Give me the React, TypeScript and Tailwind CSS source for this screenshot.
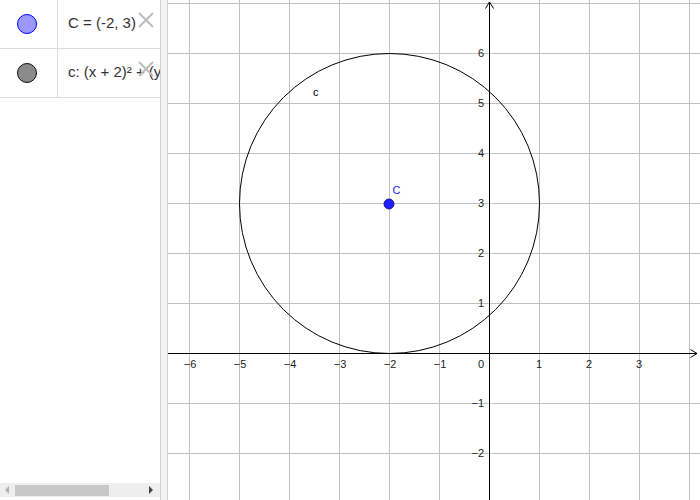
import React from 'react';

const FONT = { fontFamily: '"Liberation Sans", Arial, sans-serif' };

const XIcon = () => (
  <svg width="18" height="16" viewBox="0 0 18 16" className="absolute right-[5px] top-[12px]">
    <path d="M2 1 L16 15 M16 1 L2 15" stroke="#bdbdbd" strokeWidth="2" fill="none" />
  </svg>
);

const AlgebraRow = ({ fill, stroke, children }: { fill: string; stroke: string; children: React.ReactNode }) => (
  <div className="relative flex h-[49px] border-b border-[#dcdcdc]">
    <div className="flex w-[58px] shrink-0 items-center justify-center border-r border-[#dcdcdc] pr-[3px]">
      <svg width="22" height="22" viewBox="0 0 22 22">
        <circle cx="11" cy="11" r="9.5" fill={fill} stroke={stroke} strokeWidth="1" />
      </svg>
    </div>
    <div className="flex items-center overflow-hidden whitespace-nowrap pl-[10px] pb-[2px] text-[15px] text-[#333]">
      {children}
    </div>
    <XIcon />
  </div>
);

const AlgebraView = () => (
  <div className="flex w-[160px] shrink-0 flex-col bg-white" style={FONT}>
    <AlgebraRow fill="#9999ff" stroke="#0000ff">C = (-2, 3)</AlgebraRow>
    <AlgebraRow fill="#8a8a8a" stroke="#111">c: (x + 2)² + (y − 3)² = 9</AlgebraRow>
    <div className="flex-1" />
    {/* horizontal scrollbar */}
    <div className="flex h-[14px] items-center bg-[#eeeeee]">
      <svg width="14" height="14" viewBox="0 0 14 14">
        <path d="M9 3 L5 7 L9 11 Z" fill="#b0b0b0" />
      </svg>
      <div className="ml-[1px] h-[11px] w-[94px] bg-[#c8c8c8]" />
      <div className="flex-1" />
      <svg width="14" height="14" viewBox="0 0 14 14" className="mr-[2px]">
        <path d="M5 3 L9 7 L5 11 Z" fill="#444" />
      </svg>
    </div>
    <div className="h-[3px]" />
  </div>
);

const GraphicsView = () => {
  const ox = 489.5;
  const oy = 353.5;
  const u = 50;
  const vx = [-6, -5, -4, -3, -2, -1, 1, 2, 3, 4];
  const vy = [7, 6, 5, 4, 3, 2, 1, -1, -2];
  const xLabels = [-6, -5, -4, -3, -2, -1, 1, 2, 3];
  const yLabels = [6, 5, 4, 3, 2, 1, -1, -2];
  const lbl = (n: number) => (n < 0 ? '−' + Math.abs(n) : String(n));
  return (
    <svg width="532" height="500" viewBox="168 0 532 500" className="block bg-white" style={FONT}>
      {vx.map((k) => (
        <line key={'gx' + k} x1={ox + k * u} y1={0} x2={ox + k * u} y2={500} stroke="#c0c0c0" strokeWidth="1" />
      ))}
      {vy.map((k) => (
        <line key={'gy' + k} x1={168} y1={oy - k * u} x2={700} y2={oy - k * u} stroke="#c0c0c0" strokeWidth="1" />
      ))}
      {/* axes */}
      <line x1={168} y1={oy} x2={697} y2={oy} stroke="#000" strokeWidth="1" />
      <path d={`M690.5 ${oy - 4} L697 ${oy} L690.5 ${oy + 4}`} stroke="#000" strokeWidth="1" fill="none" />
      <line x1={ox} y1={500} x2={ox} y2={2} stroke="#000" strokeWidth="1" />
      <path d={`M${ox - 4} 8.5 L${ox} 2 L${ox + 4} 8.5`} stroke="#000" strokeWidth="1" fill="none" />
      {/* tick labels */}
      {xLabels.map((k) => (
        <text key={'lx' + k} x={489 + k * u + (k < 0 ? 1 : 0)} y={368} fontSize="11" fill="#222" textAnchor="middle">
          {lbl(k)}
        </text>
      ))}
      <text x={484} y={368} fontSize="11" fill="#222" textAnchor="end">0</text>
      {yLabels.map((k) => (
        <text key={'ly' + k} x={484} y={357 - k * u} fontSize="11" fill="#222" textAnchor="end">
          {lbl(k)}
        </text>
      ))}
      {/* circle c */}
      <circle cx={389.5} cy={203.5} r={150} stroke="#000" strokeWidth="1" fill="none" />
      <text x={313} y={96} fontSize="11" fill="#000">c</text>
      {/* point C */}
      <circle cx={389} cy={204} r={5} fill="#1f1fff" stroke="#00007a" strokeWidth="0.8" />
      <text x={392.5} y={194} fontSize="11" fill="#2222ff">C</text>
    </svg>
  );
};

export default function App() {
  return (
    <div className="flex h-[500px] w-[700px] overflow-hidden bg-white">
      <AlgebraView />
      <div className="w-[8px] shrink-0 border-x border-[#d0d0d0] bg-[#f4f4f4]" />
      <GraphicsView />
    </div>
  );
}
